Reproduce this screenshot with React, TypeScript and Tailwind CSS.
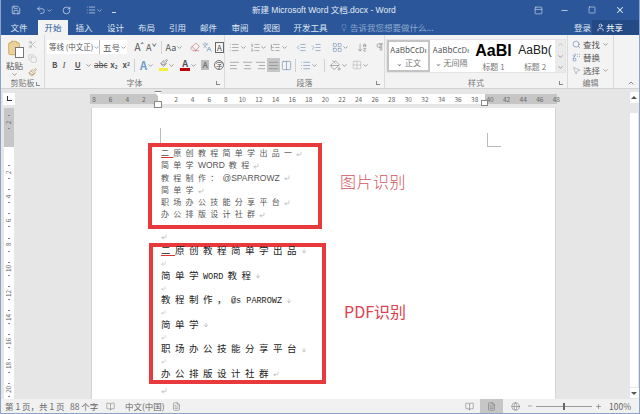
import React from 'react';
import {
  Save, Undo2, RotateCw, List, ListOrdered, ListTree, ChevronDown, ChevronUp, Lightbulb, User, X, Minus, Square,
  PanelTop, Clipboard, Scissors, Copy, Paintbrush, IndentDecrease, IndentIncrease, ArrowDownAZ, Pilcrow, AlignLeft,
  AlignCenter, AlignRight, AlignJustify, PaintBucket, Grid2x2, Search, Replace, MousePointer2, BookOpen, FileText,
  Globe, Plus, Eraser, CornerDownLeft, LayoutGrid, Languages, Columns2, ArrowDown,
} from 'lucide-react';

const TABS = [
  { label: '插入', w: 'w-[32px]' },
  { label: '设计', w: 'w-[31px]' },
  { label: '布局', w: 'w-[31px]' },
  { label: '引用', w: 'w-[31px]' },
  { label: '邮件', w: 'w-[31px]' },
  { label: '审阅', w: 'w-[32px]' },
  { label: '视图', w: 'w-[31px]' },
  { label: '开发工具', w: 'w-[47px]' },
];

const Caret = () => <ChevronDown className="w-[7px] h-[7px] shrink-0 text-[#666]" strokeWidth={2} />;
const WhiteCaret = () => <ChevronDown className="w-[7px] h-[7px] text-[#d5deec]" strokeWidth={2} />;

const GroupLabel = ({ text, launcher }: { text: string; launcher?: boolean }) => (
  <div className="relative h-[11px] flex items-center justify-center text-[8px] leading-none text-[#777]">
    {text}
    {launcher && <span className="absolute right-[4px] top-[4px] w-[4px] h-[4px] border-l border-b border-[#888]" />}
  </div>
);

const Mark = ({ small }: { small?: boolean }) => (
  <CornerDownLeft className={small ? 'inline w-[5px] h-[5px] text-[#888]' : 'inline w-[6px] h-[6px] text-[#777]'} strokeWidth={1.5} />
);

const Tick = () => <span className="w-[2px] h-px bg-[#888]" />;

// first box: OCR text coming from the picture
const LINES_A: { zh: string; latin?: string; tail?: string }[] = [
  { zh: '简单学', latin: 'WORD', tail: '教程' },
  { zh: '教程制作：', latin: '@SPARROWZ' },
  { zh: '简单学' },
  { zh: '职场办公技能分享平台' },
  { zh: '办公排版设计社群' },
];

const LINES_B: { zh: string; latin?: string; tail?: string }[] = [
  { zh: '简单学', latin: 'WORD', tail: '教程' },
  { zh: '教程制作，', latin: '@s PARROWZ' },
  { zh: '简单学' },
  { zh: '职场办公技能分享平台' },
  { zh: '办公排版设计社群' },
];

const VRULER = ['2', '4', '6', '8', '10', '12', '14', '16', '18', '20'];

export default function App() {
  return (
    <div className="w-[640px] h-[414px] overflow-hidden flex flex-col bg-[#e6e6e6] border-x border-b border-[#8aa3c9] font-['Noto_Sans_CJK_SC','Liberation_Sans',sans-serif]">
      {/* title bar */}
      <div className="-mx-px h-[20px] shrink-0 bg-[#2b579a] flex items-center text-[#e4eaf4]">
        <Save className="ml-[11px] w-[10px] h-[10px]" strokeWidth={1.5} />
        <Undo2 className="ml-[15px] w-[10px] h-[10px]" strokeWidth={1.5} />
        <WhiteCaret />
        <RotateCw className="ml-[9px] w-[9px] h-[9px]" strokeWidth={1.75} />
        <List className="ml-[15px] w-[10px] h-[10px]" strokeWidth={1.5} />
        <WhiteCaret />
        <span className="ml-[9px] w-[4px] h-[5px] border-b border-[#d5deec]" />
        <div className="ml-[136px] w-[134px] text-[8.5px] whitespace-nowrap font-['Liberation_Sans','Noto_Sans_CJK_SC',sans-serif]">
          新建 Microsoft Word 文档.docx - Word
        </div>
        <PanelTop className="ml-[148px] w-[9px] h-[9px]" strokeWidth={1.5} />
        <Minus className="ml-[17px] w-[9px] h-[9px]" strokeWidth={2} />
        <Square className="ml-[19px] w-[8px] h-[8px]" strokeWidth={1.75} />
        <X className="ml-[19px] w-[10px] h-[10px]" strokeWidth={2.5} />
      </div>

      {/* tabs */}
      <div className="-mx-px h-[15px] shrink-0 bg-[#2b579a] flex items-stretch text-[8.5px] leading-none text-[#dfe6f1]">
        <div className="w-[38px] flex items-center justify-center">文件</div>
        <div className="w-[30px] flex items-center justify-center bg-[#f3f3f3] text-[#2b579a]">开始</div>
        {TABS.map((t) => (
          <div key={t.label} className={`${t.w} flex items-center justify-center`}>{t.label}</div>
        ))}
        <div className="ml-[6px] flex items-center text-[#8ea8cf]">
          <Lightbulb className="w-[8px] h-[9px]" strokeWidth={1.5} />
          <span className="ml-[2px] w-[72px] whitespace-nowrap">告诉我您想要做什么...</span>
        </div>
        <div className="ml-[152px] flex items-center w-[20px]">登录</div>
        <div className="ml-[-2px] flex-1 bg-[#234a85] flex items-center pl-[4px] gap-[1px] text-white">
          <User className="w-[9px] h-[9px]" strokeWidth={1.75} />
          共享
        </div>
      </div>

      {/* ribbon */}
      <div className="h-[54px] shrink-0 bg-[#f3f3f3] border-b border-[#d2d2d2] flex text-[#555]">
        {/* clipboard */}
        <div className="w-[44px] shrink-0 flex flex-col border-r border-[#dadada]">
          <div className="flex-1 flex pt-[4px]">
            <div className="w-[27px] flex flex-col items-center">
              <div className="relative w-[18px] h-[19px]">
                <Clipboard className="w-[16px] h-[18px] text-[#c9a25e] fill-[#ecd29a]" strokeWidth={1.25} />
                <span className="absolute right-0 bottom-0 w-[9px] h-[11px] bg-white border border-[#777]" />
              </div>
              <span className="text-[8.5px] leading-[11px] mt-[2px]">粘贴</span>
              <Caret />
            </div>
            <div className="flex flex-col items-center gap-[5px] pt-[1px]">
              <Scissors className="w-[9px] h-[9px] text-[#999]" strokeWidth={1.25} />
              <Copy className="w-[9px] h-[9px] text-[#aaa]" strokeWidth={1.25} />
              <Paintbrush className="w-[9px] h-[9px] text-[#a87f30]" strokeWidth={1.5} />
            </div>
          </div>
          <GroupLabel text="剪贴板" launcher />
        </div>

        {/* font */}
        <div className="w-[180px] shrink-0 flex flex-col border-r border-[#dadada]">
          <div className="flex-1 pt-[5px] flex flex-col gap-[4px]">
            <div className="h-[14px] flex items-center pl-[2px]">
              <div className="w-[53px] h-[14px] bg-white flex items-center justify-between px-[2px] text-[7.5px] whitespace-nowrap border-r border-[#bbb]">
                <span>等线 (中文正)</span>
                <Caret />
              </div>
              <div className="w-[27px] h-[14px] bg-white flex items-center justify-between px-[3px] text-[8.5px] whitespace-nowrap">
                <span>五号</span>
                <Caret />
              </div>
              <span className="ml-[6px] w-[14px] text-[10px] leading-none text-center">Aˆ</span>
              <span className="w-[14px] text-[9px] leading-none text-center">Aˇ</span>
              <span className="ml-[3px] w-px h-[13px] bg-[#d0d0d0]" />
              <span className="ml-[4px] text-[9px] leading-none">Aa</span>
              <Caret />
              <span className="ml-[6px] w-[14px] flex justify-center"><Eraser className="w-[10px] h-[10px] text-[#c0606e]" strokeWidth={1.5} /></span>
              <span className="w-[13px] flex justify-center"><Languages className="w-[10px] h-[10px] text-[#5a7fa8]" strokeWidth={1.25} /></span>
              <span className="ml-[2px] w-[10px] h-[11px] border border-[#666] text-[8px] leading-[10px] text-center">A</span>
            </div>
            <div className="h-[14px] flex items-center pl-[7px] text-[8px] leading-none">
              <span className="w-[11px] font-bold">B</span>
              <span className="w-[13px] italic font-['Liberation_Serif',serif] text-[9px]">I</span>
              <span className="w-[11px] underline font-semibold">U</span>
              <Caret />
              <span className="ml-[2px] w-[17px] line-through">abc</span>
              <span className="w-[13px] font-semibold">x<sub className="text-[5px]">2</sub></span>
              <span className="w-[10px] font-semibold">x<sup className="text-[5px]">2</sup></span>
              <span className="ml-[2px] w-px h-[13px] bg-[#d0d0d0]" />
              <span className="ml-[5px] text-[11px] text-[#6f9bd1] font-semibold">A</span>
              <Caret />
              <span className="ml-[5px] w-[10px] h-[12px] border-b-[3px] border-[#f3ee3a] flex justify-center">
                <Paintbrush className="w-[8px] h-[8px]" strokeWidth={1.5} />
              </span>
              <Caret />
              <span className="ml-[5px] w-[10px] h-[12px] border-b-[3px] border-[#c00000] text-center text-[9px] font-semibold">A</span>
              <Caret />
              <span className="ml-[4px] w-[9px] h-[10px] bg-[#bdbdbd] text-center text-[8px] leading-[10px]">A</span>
              <span className="ml-[5px] w-[10px] h-[10px] border border-[#777] rounded-full text-[7px] leading-[9px] text-center">字</span>
            </div>
          </div>
          <GroupLabel text="字体" launcher />
        </div>

        {/* paragraph */}
        <div className="w-[160px] shrink-0 flex flex-col border-r border-[#dadada]">
          <div className="flex-1 pt-[5px] flex flex-col gap-[4px] text-[#777]">
            <div className="h-[14px] flex items-center pl-[4px]">
              <List className="w-[11px] h-[11px]" strokeWidth={1.25} />
              <Caret />
              <ListOrdered className="ml-[3px] w-[11px] h-[11px]" strokeWidth={1.25} />
              <Caret />
              <ListTree className="ml-[3px] w-[11px] h-[11px]" strokeWidth={1.25} />
              <Caret />
              <IndentDecrease className="ml-[8px] w-[11px] h-[11px] text-[#5f7ea8]" strokeWidth={1.25} />
              <IndentIncrease className="ml-[5px] w-[11px] h-[11px] text-[#5f7ea8]" strokeWidth={1.25} />
              <LayoutGrid className="ml-[10px] w-[11px] h-[11px] text-[#6a8ab0]" strokeWidth={1.25} />
              <Caret />
              <ArrowDownAZ className="ml-[8px] w-[11px] h-[11px]" strokeWidth={1.25} />
              <Pilcrow className="ml-[7px] w-[10px] h-[10px]" strokeWidth={1.5} />
            </div>
            <div className="h-[14px] flex items-center pl-[4px]">
              <AlignLeft className="w-[11px] h-[11px]" strokeWidth={1.25} />
              <AlignCenter className="ml-[2px] w-[11px] h-[11px]" strokeWidth={1.25} />
              <AlignRight className="ml-[2px] w-[11px] h-[11px]" strokeWidth={1.25} />
              <span className="ml-[1px] w-[13px] h-[14px] bg-[#c6c6c6] flex items-center justify-center">
                <AlignJustify className="w-[11px] h-[11px]" strokeWidth={1.25} />
              </span>
              <Columns2 className="ml-[1px] w-[11px] h-[11px] text-[#5f7ea8]" strokeWidth={1.25} />
              <span className="ml-[3px] w-px h-[13px] bg-[#d0d0d0]" />
              <List className="ml-[4px] w-[11px] h-[11px] text-[#5f7ea8]" strokeWidth={1.25} />
              <Caret />
              <span className="ml-[6px] w-px h-[13px] bg-[#d0d0d0]" />
              <PaintBucket className="ml-[5px] w-[11px] h-[11px]" strokeWidth={1.25} />
              <Caret />
              <Grid2x2 className="ml-[4px] w-[10px] h-[10px] text-[#aaa]" strokeWidth={1.25} />
              <Caret />
            </div>
          </div>
          <GroupLabel text="段落" launcher />
        </div>

        {/* styles */}
        <div className="w-[183px] shrink-0 flex flex-col border-r border-[#dadada]">
          <div className="flex-1 pt-[4px] pl-[1px]">
            <div className="w-[180px] h-[34px] bg-white flex border border-[#e4e4e4]">
              <div className="w-[43px] border-2 border-[#c4c4c4] flex flex-col items-center justify-center text-[8px] leading-[11px] overflow-hidden">
                <span className="whitespace-nowrap">AaBbCcDı</span>
                <span className="mt-[2px] text-[#777]">⌄ 正文</span>
              </div>
              <div className="w-[42px] flex flex-col items-center justify-center text-[8px] leading-[11px] overflow-hidden">
                <span className="whitespace-nowrap">AaBbCcDı</span>
                <span className="mt-[2px] text-[#777]">⌄ 无间隔</span>
              </div>
              <div className="w-[43px] flex flex-col items-center overflow-hidden">
                <span className="h-[21px] text-[16px] leading-[21px] font-bold text-black whitespace-nowrap font-['Liberation_Sans',sans-serif]">AaBl</span>
                <span className="text-[8px] leading-[11px] text-[#777]">标题 1</span>
              </div>
              <div className="w-[40px] flex flex-col items-center overflow-hidden">
                <span className="h-[21px] text-[12px] leading-[21px] text-[#222] whitespace-nowrap font-['Liberation_Sans',sans-serif]">AaBb(</span>
                <span className="text-[8px] leading-[11px] text-[#777]">标题 2</span>
              </div>
              <div className="ml-auto w-[10px] bg-[#eaeaea] flex flex-col items-center justify-between py-[1px]">
                <ChevronUp className="w-[7px] h-[7px] text-[#aaa]" strokeWidth={2} />
                <ChevronDown className="w-[7px] h-[7px] text-[#666]" strokeWidth={2} />
                <ChevronDown className="w-[7px] h-[7px] text-[#666]" strokeWidth={2} />
              </div>
            </div>
          </div>
          <GroupLabel text="样式" launcher />
        </div>

        {/* editing */}
        <div className="w-[46px] shrink-0 flex flex-col border-r border-[#dadada]">
          <div className="flex-1 pt-[3px] pl-[4px] flex flex-col text-[8.5px] leading-[13px]">
            <div className="flex items-center gap-[2px]"><Search className="w-[9px] h-[9px] text-[#5f7ea8]" strokeWidth={1.5} />查找<Caret /></div>
            <div className="flex items-center gap-[2px]"><Replace className="w-[9px] h-[9px] text-[#5f7ea8]" strokeWidth={1.5} />替换</div>
            <div className="flex items-center gap-[2px]"><MousePointer2 className="w-[9px] h-[9px] text-[#888]" strokeWidth={1.25} />选择<Caret /></div>
          </div>
          <GroupLabel text="编辑" />
        </div>
        <div className="flex-1 flex items-end justify-end pr-[4px] pb-[1px]">
          <ChevronUp className="w-[8px] h-[8px] text-[#555]" strokeWidth={2} />
        </div>
      </div>

      {/* work area */}
      <div className="flex-1 min-h-0 flex">
        <div className="flex-1 min-w-0 flex flex-col">
          {/* horizontal ruler */}
          <div className="h-[19px] shrink-0 flex items-center">
            <div className="ml-[2px] w-[12px] h-[12px] bg-white flex items-center justify-center">
              <span className="w-[5px] h-[5px] border-l border-b border-[#333]" />
            </div>
            <div className="ml-[75px] h-[10px] flex text-[6.5px] leading-[10px] text-[#666]">
              <div className="relative w-[68px] bg-[#c6c6c6] flex gap-[8.6px]">
                {['8', '6', '4', '2'].map((n) => <span key={n} className="w-[8px] text-center">{n}</span>)}
              </div>
              <div className="relative w-[327px] bg-white flex gap-[8.6px] pl-[14px]">
                {['2', '4', '6', '8', '10', '12', '14', '16', '18', '20', '22', '24', '26', '28', '30', '32', '34', '36', '38'].map((n) => (
                  <span key={n} className="w-[8px] shrink-0 text-center">{n}</span>
                ))}
                <span className="absolute left-[-4px] top-[-3px] w-[8px] h-[6px] bg-white border border-[#888] [clip-path:polygon(0_0,100%_0,50%_100%)]" />
                <span className="absolute left-[-4px] top-[7px] w-[8px] h-[7px] bg-white border border-[#888]" />
                <span className="absolute right-[-3px] top-[6px] w-[7px] h-[6px] bg-white border border-[#888]" />
              </div>
              <div className="w-[72px] bg-[#c6c6c6] flex gap-[8.6px] pl-px">
                {['40', '42', '44', '46', '48'].map((n) => <span key={n} className="w-[8px] shrink-0 text-center">{n}</span>)}
              </div>
            </div>
          </div>

          <div className="flex-1 min-h-0 flex">
            {/* vertical ruler */}
            <div className="ml-[3px] w-[10px] shrink-0 flex flex-col text-[6.5px] leading-none text-[#666]">
              <div className="h-[39px] shrink-0 bg-[#c6c6c6] flex flex-col items-center pt-[7px] gap-[2.5px]">
                <Tick />
                <span className="-rotate-90 h-[7px] leading-[7px]">2</span>
                <Tick />
                <span className="mt-[10px]"><Tick /></span>
              </div>
              <div className="flex-1 bg-white flex flex-col items-center pt-[13px]">
                {VRULER.map((n) => (
                  <div key={n} className="h-[24.2px] shrink-0 flex flex-col items-center justify-center gap-[2.5px]">
                    <Tick />
                    <span className="-rotate-90 h-[7px] leading-[7px]">{n}</span>
                    <Tick />
                  </div>
                ))}
              </div>
            </div>

            {/* page */}
            <div className="ml-[77px] w-[465px] shrink-0 bg-white border-x border-[#d4d4d4] relative pl-[56px] pt-[35px] overflow-hidden">
              <span className="absolute left-[68px] top-[20px] w-[1px] h-[15px] bg-[#bbb]" />
              <span className="absolute left-[395px] top-[25px] w-[14px] h-[14px] border-l border-b border-[#bbb]" />

              <div className="flex items-center">
                <div className="w-[174px] h-[86px] shrink-0 border-[4px] border-[#e83a3c] pl-[9px] text-[8px] leading-[12.3px] text-[#555] whitespace-nowrap">
                  <div className="tracking-[4.3px] h-[12.3px]">
                    <span className="underline decoration-[#d33]">二</span>原创教程简单学出品一<Mark />
                  </div>
                  {LINES_A.map((l) => (
                    <div key={l.zh} className="h-[12.3px]">
                      <span className="tracking-[4.3px]">{l.zh}</span>
                      {l.latin && <span className="font-['Liberation_Sans',sans-serif] text-[8.5px] mr-[4px]">{l.latin}</span>}
                      {l.tail && <span className="tracking-[4.3px]">{l.tail}</span>}
                      <Mark />
                    </div>
                  ))}
                </div>
                <div className="ml-[18px] mb-[10px] text-[16px] leading-none tracking-[0.5px] text-[#d4545e] font-['Noto_Sans_CJK_SC',serif] font-light whitespace-nowrap">
                  图片识别
                </div>
              </div>

              <div className="h-[14px] pl-[13px] pt-[5px] flex items-start"><Mark /></div>

              <div className="flex items-center">
                <div className="ml-[1px] w-[177px] h-[141px] shrink-0 border-[4px] border-[#e83a3c] pl-[8px] text-[9.5px] leading-[14px] text-[#222] whitespace-nowrap">
                  <div className="tracking-[4.5px] h-[14px] -mt-[4px]">
                    <span className="underline decoration-[#d33]">二</span>原创教程简单学出品<ArrowDown className="inline w-[6px] h-[6px] text-[#777]" strokeWidth={1.5} />
                  </div>
                  {LINES_B.map((l, i) => (
                    <div key={l.zh}>
                      <div className="h-[10.6px] leading-[10.6px]"><Mark small /></div>
                      <div className="h-[14px]">
                        <span className="tracking-[4.5px]">{l.zh}</span>
                        {l.latin && <span className="font-['Liberation_Mono',monospace] text-[8.5px] mr-[4px]">{l.latin}</span>}
                        {l.tail && <span className="tracking-[4.5px]">{l.tail}</span>}
                        {i === LINES_B.length - 1 ? <Mark /> : <ArrowDown className="inline w-[6px] h-[6px] text-[#777]" strokeWidth={1.5} />}
                      </div>
                    </div>
                  ))}
                </div>
                <div className="ml-[18px] mb-[6px] text-[16px] leading-none text-[#e0404e] font-['Noto_Sans_CJK_SC',sans-serif] whitespace-nowrap">
                  PDF识别
                </div>
              </div>
              <div className="pl-[13px] h-[8px] leading-[8px]"><Mark /></div>
            </div>
          </div>
        </div>

        {/* scrollbar */}
        <div className="w-[10px] shrink-0 flex flex-col items-center pt-[3px] pb-[1px]">
          <div className="w-[9px] h-[11px] bg-white flex items-center justify-center">
            <span className="w-0 h-0 border-x-[3px] border-x-transparent border-b-[3px] border-b-[#555]" />
          </div>
          <div className="mt-[10px] w-[8px] flex-1 bg-white" />
          <div className="mt-[1px] w-[9px] h-[10px] bg-white flex items-center justify-center">
            <span className="w-0 h-0 border-x-[3px] border-x-transparent border-t-[3px] border-t-[#555]" />
          </div>
        </div>
      </div>

      {/* status bar */}
      <div className="h-[14px] shrink-0 bg-[#f1f1f1] flex items-center text-[8.5px] leading-none text-[#666] whitespace-nowrap">
        <span className="ml-[4px] w-[56px]">第 1 页，共 1 页</span>
        <span className="ml-[9px] w-[28px]">88 个字</span>
        <BookOpen className="ml-[8px] w-[9px] h-[9px]" strokeWidth={1.25} />
        <span className="ml-[10px] w-[34px]">中文(中国)</span>
        <FileText className="ml-[13px] w-[9px] h-[9px]" strokeWidth={1.25} />
        <BookOpen className="ml-[284px] w-[9px] h-[9px]" strokeWidth={1.25} />
        <span className="ml-[6px] w-[23px] h-[14px] bg-[#c6c6c6] flex items-center justify-center">
          <FileText className="w-[9px] h-[9px]" strokeWidth={1.25} />
        </span>
        <Globe className="ml-[8px] w-[9px] h-[9px]" strokeWidth={1.25} />
        <Minus className="ml-[7px] w-[6px] h-[6px]" strokeWidth={2} />
        <div className="ml-[3px] w-[56px] h-px bg-[#999] flex justify-center items-center">
          <span className="w-[2px] h-[7px] bg-[#666]" />
        </div>
        <Plus className="ml-[3px] w-[7px] h-[7px]" strokeWidth={2} />
        <span className="ml-[7px]">100%</span>
      </div>
    </div>
  );
}
